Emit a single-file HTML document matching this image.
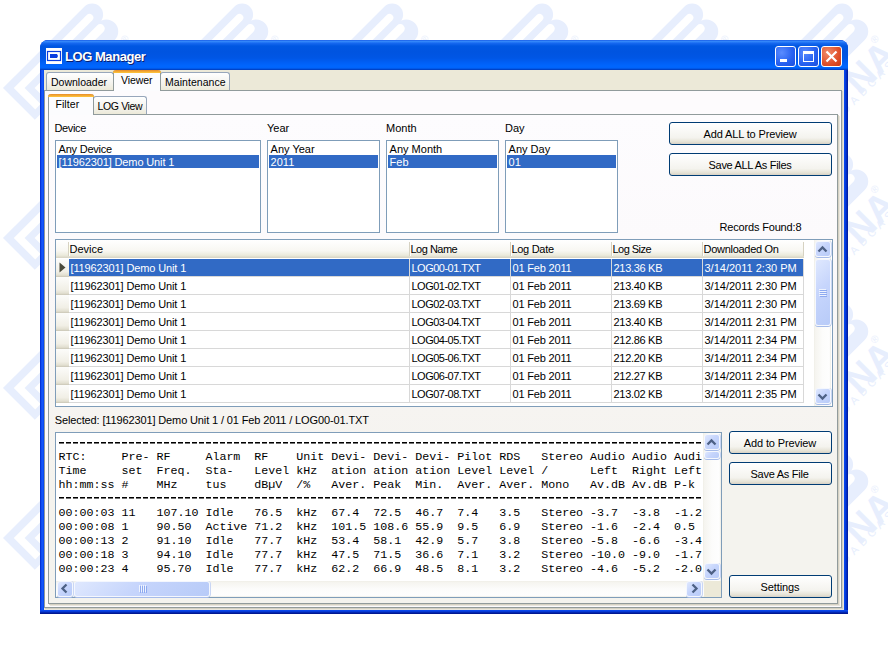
<!DOCTYPE html>
<html><head><meta charset="utf-8">
<style>
*{margin:0;padding:0;box-sizing:border-box}
html,body{width:888px;height:654px;overflow:hidden;background:#fff;position:relative;font-family:"Liberation Sans",sans-serif;font-size:11px;color:#000}
.a{position:absolute}
.t{position:absolute;white-space:nowrap;line-height:13px}
#win{left:40px;top:40px;width:808px;height:574px;background:#0831d9;border-radius:8px 8px 0 0;overflow:hidden}
#title{left:0;top:0;width:808px;height:30px;background:linear-gradient(#0a49e0 0px,#3c8ffb 1px,#2a7df8 2px,#1466ee 3.5px,#0057e2 6px,#0054e0 12px,#0056e5 18px,#005ef4 22px,#0066fe 26px,#0064fb 28px,#0043c8 29.5px,#003ab8 30px)}
#client{left:4px;top:30px;width:800px;height:540px;background:#ece9d8}
.tb{position:absolute;top:6px;width:21px;height:21px;border:1px solid #fff;border-radius:3px;background:radial-gradient(circle at 30% 30%,#5a8cff,#2660f0 60%,#1d4fdc)}
.tab{position:absolute;border:1px solid #98a7bb;border-bottom:none;border-radius:3px 3px 0 0;background:linear-gradient(#fff,#f4f3ee 60%,#ece9d8)}
.tabsel{position:absolute;border:1px solid #919b9c;border-bottom:none;border-top:none;border-radius:3px 3px 0 0;background:#fcfcfe}
.tabsel:before{content:"";position:absolute;left:-1px;right:-1px;top:0;height:3px;background:linear-gradient(#e68b2c,#ffc73c);border-radius:3px 3px 0 0}
.panel{position:absolute;border:1px solid #919b9c;box-shadow:1px 1px 0 #d5d1c3,2px 2px 0 #e9e6dc}
.lb{position:absolute;border:1px solid #7f9db9;background:#fff}
.sel{position:absolute;background:#316ac5;color:#fff}
.btn{position:absolute;border:1px solid #003c74;border-radius:3px;background:linear-gradient(#fff,#f4f3ee 70%,#e5e2d5 90%,#d6d0c5);text-align:center;line-height:22px}
.hdr{background:linear-gradient(#fff,#f8f7f2 60%,#ebeadb 85%,#d6d2c2)}
.rh{background:linear-gradient(#fcfcfa,#f1efe6 70%,#e2dfd0 90%,#c9c5b5)}
.sbb{border:1px solid #f4f7fe;border-radius:3px;background:linear-gradient(135deg,#dfe8fe,#c6d5fc 45%,#b8cbf8);box-shadow:0 1px 0 #a6bbe9,1px 0 0 #c9d6f4}
.track{background:linear-gradient(90deg,#eeede5,#f5f4ef 1px,#fcfcfb 50%,#fefefe 90%,#eeede5)}
.htrack{background:linear-gradient(#eeede5,#f5f4ef 1px,#fcfcfb 50%,#fefefe 90%,#eeede5)}
.mono{font-family:"Liberation Mono",monospace;font-size:11.667px;line-height:14px;color:#000}
.dash{background:repeating-linear-gradient(90deg,#000 0,#000 5px,transparent 5px,transparent 7px);-webkit-mask-image:linear-gradient(#000 50%,rgba(0,0,0,.55) 50%)}
</style></head><body>
<svg class="a" style="left:0;top:0" width="888" height="654"><defs><g id="lg" fill="#e7eefd">
<path d="M0 0 H115 A11 11 0 0 1 115 22 H0 Z M0 21 H113 A12 12 0 0 1 113 45 H0 Z"/>
<path fill="#fff" d="M7.6 7.6 H110.8 A3.85 3.85 0 0 1 110.8 15.3 H15.3 V38 H7.6 Z M22.3 22.3 H110.8 A4.5 4.5 0 0 1 110.8 31.3 H22.3 Z"/>
<text x="70" y="81" font-family="Liberation Sans" font-weight="bold" font-size="38">NA</text>
<text x="117" y="55" font-family="Liberation Sans" font-size="10">&#174;</text>
<text x="22" y="84" font-family="Liberation Sans" font-size="11" letter-spacing="4.5">BROADCAST</text>
</g></defs><use href="#lg" transform="translate(-147 -62) rotate(-45)"/><use href="#lg" transform="translate(-147 88) rotate(-45)"/><use href="#lg" transform="translate(-147 238) rotate(-45)"/><use href="#lg" transform="translate(-147 388) rotate(-45)"/><use href="#lg" transform="translate(-147 538) rotate(-45)"/><use href="#lg" transform="translate(3 -62) rotate(-45)"/><use href="#lg" transform="translate(3 88) rotate(-45)"/><use href="#lg" transform="translate(3 238) rotate(-45)"/><use href="#lg" transform="translate(3 388) rotate(-45)"/><use href="#lg" transform="translate(3 538) rotate(-45)"/><use href="#lg" transform="translate(153 -62) rotate(-45)"/><use href="#lg" transform="translate(153 88) rotate(-45)"/><use href="#lg" transform="translate(153 238) rotate(-45)"/><use href="#lg" transform="translate(153 388) rotate(-45)"/><use href="#lg" transform="translate(153 538) rotate(-45)"/><use href="#lg" transform="translate(303 -62) rotate(-45)"/><use href="#lg" transform="translate(303 88) rotate(-45)"/><use href="#lg" transform="translate(303 238) rotate(-45)"/><use href="#lg" transform="translate(303 388) rotate(-45)"/><use href="#lg" transform="translate(303 538) rotate(-45)"/><use href="#lg" transform="translate(453 -62) rotate(-45)"/><use href="#lg" transform="translate(453 88) rotate(-45)"/><use href="#lg" transform="translate(453 238) rotate(-45)"/><use href="#lg" transform="translate(453 388) rotate(-45)"/><use href="#lg" transform="translate(453 538) rotate(-45)"/><use href="#lg" transform="translate(603 -62) rotate(-45)"/><use href="#lg" transform="translate(603 88) rotate(-45)"/><use href="#lg" transform="translate(603 238) rotate(-45)"/><use href="#lg" transform="translate(603 388) rotate(-45)"/><use href="#lg" transform="translate(603 538) rotate(-45)"/><use href="#lg" transform="translate(753 -62) rotate(-45)"/><use href="#lg" transform="translate(753 88) rotate(-45)"/><use href="#lg" transform="translate(753 238) rotate(-45)"/><use href="#lg" transform="translate(753 388) rotate(-45)"/><use href="#lg" transform="translate(753 538) rotate(-45)"/><use href="#lg" transform="translate(903 -62) rotate(-45)"/><use href="#lg" transform="translate(903 88) rotate(-45)"/><use href="#lg" transform="translate(903 238) rotate(-45)"/><use href="#lg" transform="translate(903 388) rotate(-45)"/><use href="#lg" transform="translate(903 538) rotate(-45)"/></svg>
<div id="win" class="a">
  <div id="title" class="a">
    <svg class="a" style="left:6px;top:8px" width="16" height="16" viewBox="0 0 16 16"><rect x="0" y="0" width="16" height="16" fill="#fff"/><rect x="1.5" y="3.5" width="13" height="9" fill="none" stroke="#0a3de0" stroke-width="1.2"/><path d="M4 6 H11 L12 8 L11 10 H4 Z" fill="#0a3de0"/></svg>
    <div class="t" style="left:25px;top:10px;font-weight:bold;font-size:13px;letter-spacing:-0.45px;color:#fff;text-shadow:1px 1px 0 #0a1e6e">LOG Manager</div>
    <div class="tb" style="left:735px"><div class="a" style="left:4px;top:12px;width:7px;height:3px;background:#fff"></div></div>
    <div class="tb" style="left:758px"><div class="a" style="left:4px;top:4px;width:11px;height:11px;border:1px solid #fff;border-top-width:3px"></div></div>
    <div class="tb" style="left:781px;background:radial-gradient(circle at 30% 30%,#f08c6c,#e0502a 60%,#c83a14)">
      <svg class="a" style="left:0;top:0" width="19" height="19" viewBox="0 0 19 19"><path d="M4.5 4.5 L14.5 14.5 M14.5 4.5 L4.5 14.5" stroke="#fff" stroke-width="2.2"/></svg>
    </div>
  </div>
  <div class="a" style="left:0;top:30px;width:4px;height:544px;background:linear-gradient(90deg,#0025c8,#0840e6 1px,#1a5cff 2px,#0d50f5 3px,#0845ee)"></div>
  <div class="a" style="left:804px;top:30px;width:4px;height:544px;background:linear-gradient(90deg,#0a4cf4,#0540e4 1px,#0335d4 2px,#0024b0 3px,#00189a)"></div>
  <div class="a" style="left:0;top:570px;width:808px;height:4px;background:linear-gradient(#0a4cf2,#0843e4 1px,#0532c8 2px,#001a98 3px,#00138a)"></div>
  <div id="client" class="a"></div>
</div>
<div class="tab" style="left:46px;top:72px;width:68px;height:18px"></div>
<div class="t" style="left:51px;top:76px;font-size:10.5px;letter-spacing:-0.005px">Downloader</div>
<div class="tab" style="left:160px;top:72px;width:70px;height:18px"></div>
<div class="t" style="left:165px;top:76px;font-size:10.5px;letter-spacing:0.052px">Maintenance</div>
<div class="panel" style="left:44px;top:90px;width:798px;height:518px;background:#fdfbfd"></div>
<div class="tabsel" style="left:113px;top:70px;width:48px;height:21px"></div>
<div class="t" style="left:121px;top:74px;font-size:10.5px;letter-spacing:-0.068px">Viewer</div>
<div class="tab" style="left:93px;top:96px;width:54px;height:18px"></div>
<div class="t" style="left:97.6px;top:100px;font-size:10.5px;letter-spacing:-0.384px">LOG View</div>
<div class="panel" style="left:48px;top:114px;width:790px;height:490px;background:linear-gradient(#fdfcfe,#fcfafc 25%,#f6f4f1 60%,#f4f3ee 75%,#f4f3ee)"></div>
<div class="tabsel" style="left:48px;top:94px;width:46px;height:21px"></div>
<div class="t" style="left:55.5px;top:98px;font-size:10.5px;letter-spacing:0.059px">Filter</div>
<div class="t" style="left:54.5px;top:122px;letter-spacing:-0.354px">Device</div>
<div class="t" style="left:267px;top:122px">Year</div>
<div class="t" style="left:386px;top:122px">Month</div>
<div class="t" style="left:505px;top:122px">Day</div>
<div class="lb" style="left:55px;top:140px;width:206px;height:93px"></div>
<div class="t" style="left:58.6px;top:143px;letter-spacing:-0.234px">Any Device</div>
<div class="sel" style="left:57px;top:155px;width:202px;height:13px"></div>
<div class="t" style="left:58.6px;top:156px;color:#fff;letter-spacing:-0.124px">[11962301] Demo Unit 1</div>
<div class="lb" style="left:267px;top:140px;width:113px;height:93px"></div>
<div class="t" style="left:270.6px;top:143px">Any Year</div>
<div class="sel" style="left:269px;top:155px;width:109px;height:13px"></div>
<div class="t" style="left:270.6px;top:156px;color:#fff">2011</div>
<div class="lb" style="left:386px;top:140px;width:113px;height:93px"></div>
<div class="t" style="left:389.6px;top:143px">Any Month</div>
<div class="sel" style="left:388px;top:155px;width:109px;height:13px"></div>
<div class="t" style="left:389.6px;top:156px;color:#fff">Feb</div>
<div class="lb" style="left:505px;top:140px;width:113px;height:93px"></div>
<div class="t" style="left:508.6px;top:143px">Any Day</div>
<div class="sel" style="left:507px;top:155px;width:109px;height:13px"></div>
<div class="t" style="left:508.6px;top:156px;color:#fff">01</div>
<div class="btn" style="left:669px;top:122px;width:163px;height:23px"></div>
<div class="t" style="left:703.6px;top:128px;letter-spacing:-0.145px">Add ALL to Preview</div>
<div class="btn" style="left:669px;top:153px;width:163px;height:23px"></div>
<div class="t" style="left:708.6px;top:159px;letter-spacing:-0.322px">Save ALL As Files</div>
<div class="t" style="left:719.4px;top:221px;letter-spacing:-0.159px">Records Found:8</div>
<div class="lb" style="left:55px;top:239px;width:778px;height:168px"></div>
<div class="a hdr" style="left:56px;top:240px;width:748px;height:18px"></div>
<div class="a" style="left:68px;top:242px;width:1px;height:14px;background:#d6d2c2"></div>
<div class="a" style="left:69px;top:242px;width:1px;height:14px;background:#fff"></div>
<div class="a" style="left:409px;top:242px;width:1px;height:14px;background:#d6d2c2"></div>
<div class="a" style="left:410px;top:242px;width:1px;height:14px;background:#fff"></div>
<div class="a" style="left:510px;top:242px;width:1px;height:14px;background:#d6d2c2"></div>
<div class="a" style="left:511px;top:242px;width:1px;height:14px;background:#fff"></div>
<div class="a" style="left:611px;top:242px;width:1px;height:14px;background:#d6d2c2"></div>
<div class="a" style="left:612px;top:242px;width:1px;height:14px;background:#fff"></div>
<div class="a" style="left:702px;top:242px;width:1px;height:14px;background:#d6d2c2"></div>
<div class="a" style="left:703px;top:242px;width:1px;height:14px;background:#fff"></div>
<div class="a" style="left:803px;top:242px;width:1px;height:14px;background:#d6d2c2"></div>
<div class="a" style="left:804px;top:242px;width:1px;height:14px;background:#fff"></div>
<div class="t" style="left:69.5px;top:243px">Device</div>
<div class="t" style="left:410.5px;top:243px;letter-spacing:-0.508px">Log Name</div>
<div class="t" style="left:511.5px;top:243px;letter-spacing:-0.307px">Log Date</div>
<div class="t" style="left:612.5px;top:243px;letter-spacing:-0.527px">Log Size</div>
<div class="t" style="left:703.5px;top:243px;letter-spacing:-0.284px">Downloaded On</div>
<div class="a rh" style="left:56px;top:259px;width:13px;height:18px"></div>
<div class="sel" style="left:69px;top:259px;width:735px;height:17px"></div>
<div class="a" style="left:69px;top:276px;width:735px;height:1px;background:#d8d8d8"></div>
<div class="a" style="left:409px;top:259px;width:1px;height:17px;background:#d8d8d8"></div>
<div class="a" style="left:510px;top:259px;width:1px;height:17px;background:#d8d8d8"></div>
<div class="a" style="left:611px;top:259px;width:1px;height:17px;background:#d8d8d8"></div>
<div class="a" style="left:702px;top:259px;width:1px;height:17px;background:#d8d8d8"></div>
<div class="a" style="left:803px;top:259px;width:1px;height:17px;background:#d8d8d8"></div>
<div class="t" style="left:70.5px;top:262px;color:#fff;letter-spacing:-0.124px">[11962301] Demo Unit 1</div>
<div class="t" style="left:411.5px;top:262px;color:#fff;letter-spacing:-0.517px">LOG00-01.TXT</div>
<div class="t" style="left:512.5px;top:262px;color:#fff;letter-spacing:-0.179px">01 Feb 2011</div>
<div class="t" style="left:613.5px;top:262px;color:#fff;letter-spacing:-0.297px">213.36 KB</div>
<div class="t" style="left:704.5px;top:262px;color:#fff;letter-spacing:0.003px">3/14/2011 2:30 PM</div>
<div class="a rh" style="left:56px;top:277px;width:13px;height:18px"></div>
<div class="a" style="left:69px;top:294px;width:735px;height:1px;background:#d8d8d8"></div>
<div class="a" style="left:409px;top:277px;width:1px;height:17px;background:#d8d8d8"></div>
<div class="a" style="left:510px;top:277px;width:1px;height:17px;background:#d8d8d8"></div>
<div class="a" style="left:611px;top:277px;width:1px;height:17px;background:#d8d8d8"></div>
<div class="a" style="left:702px;top:277px;width:1px;height:17px;background:#d8d8d8"></div>
<div class="a" style="left:803px;top:277px;width:1px;height:17px;background:#d8d8d8"></div>
<div class="t" style="left:70.5px;top:280px;letter-spacing:-0.124px">[11962301] Demo Unit 1</div>
<div class="t" style="left:411.5px;top:280px;letter-spacing:-0.517px">LOG01-02.TXT</div>
<div class="t" style="left:512.5px;top:280px;letter-spacing:-0.179px">01 Feb 2011</div>
<div class="t" style="left:613.5px;top:280px;letter-spacing:-0.297px">213.40 KB</div>
<div class="t" style="left:704.5px;top:280px;letter-spacing:0.003px">3/14/2011 2:30 PM</div>
<div class="a rh" style="left:56px;top:295px;width:13px;height:18px"></div>
<div class="a" style="left:69px;top:312px;width:735px;height:1px;background:#d8d8d8"></div>
<div class="a" style="left:409px;top:295px;width:1px;height:17px;background:#d8d8d8"></div>
<div class="a" style="left:510px;top:295px;width:1px;height:17px;background:#d8d8d8"></div>
<div class="a" style="left:611px;top:295px;width:1px;height:17px;background:#d8d8d8"></div>
<div class="a" style="left:702px;top:295px;width:1px;height:17px;background:#d8d8d8"></div>
<div class="a" style="left:803px;top:295px;width:1px;height:17px;background:#d8d8d8"></div>
<div class="t" style="left:70.5px;top:298px;letter-spacing:-0.124px">[11962301] Demo Unit 1</div>
<div class="t" style="left:411.5px;top:298px;letter-spacing:-0.517px">LOG02-03.TXT</div>
<div class="t" style="left:512.5px;top:298px;letter-spacing:-0.179px">01 Feb 2011</div>
<div class="t" style="left:613.5px;top:298px;letter-spacing:-0.297px">213.69 KB</div>
<div class="t" style="left:704.5px;top:298px;letter-spacing:0.003px">3/14/2011 2:30 PM</div>
<div class="a rh" style="left:56px;top:313px;width:13px;height:18px"></div>
<div class="a" style="left:69px;top:330px;width:735px;height:1px;background:#d8d8d8"></div>
<div class="a" style="left:409px;top:313px;width:1px;height:17px;background:#d8d8d8"></div>
<div class="a" style="left:510px;top:313px;width:1px;height:17px;background:#d8d8d8"></div>
<div class="a" style="left:611px;top:313px;width:1px;height:17px;background:#d8d8d8"></div>
<div class="a" style="left:702px;top:313px;width:1px;height:17px;background:#d8d8d8"></div>
<div class="a" style="left:803px;top:313px;width:1px;height:17px;background:#d8d8d8"></div>
<div class="t" style="left:70.5px;top:316px;letter-spacing:-0.124px">[11962301] Demo Unit 1</div>
<div class="t" style="left:411.5px;top:316px;letter-spacing:-0.517px">LOG03-04.TXT</div>
<div class="t" style="left:512.5px;top:316px;letter-spacing:-0.179px">01 Feb 2011</div>
<div class="t" style="left:613.5px;top:316px;letter-spacing:-0.297px">213.40 KB</div>
<div class="t" style="left:704.5px;top:316px;letter-spacing:0.003px">3/14/2011 2:31 PM</div>
<div class="a rh" style="left:56px;top:331px;width:13px;height:18px"></div>
<div class="a" style="left:69px;top:348px;width:735px;height:1px;background:#d8d8d8"></div>
<div class="a" style="left:409px;top:331px;width:1px;height:17px;background:#d8d8d8"></div>
<div class="a" style="left:510px;top:331px;width:1px;height:17px;background:#d8d8d8"></div>
<div class="a" style="left:611px;top:331px;width:1px;height:17px;background:#d8d8d8"></div>
<div class="a" style="left:702px;top:331px;width:1px;height:17px;background:#d8d8d8"></div>
<div class="a" style="left:803px;top:331px;width:1px;height:17px;background:#d8d8d8"></div>
<div class="t" style="left:70.5px;top:334px;letter-spacing:-0.124px">[11962301] Demo Unit 1</div>
<div class="t" style="left:411.5px;top:334px;letter-spacing:-0.517px">LOG04-05.TXT</div>
<div class="t" style="left:512.5px;top:334px;letter-spacing:-0.179px">01 Feb 2011</div>
<div class="t" style="left:613.5px;top:334px;letter-spacing:-0.297px">212.86 KB</div>
<div class="t" style="left:704.5px;top:334px;letter-spacing:0.003px">3/14/2011 2:34 PM</div>
<div class="a rh" style="left:56px;top:349px;width:13px;height:18px"></div>
<div class="a" style="left:69px;top:366px;width:735px;height:1px;background:#d8d8d8"></div>
<div class="a" style="left:409px;top:349px;width:1px;height:17px;background:#d8d8d8"></div>
<div class="a" style="left:510px;top:349px;width:1px;height:17px;background:#d8d8d8"></div>
<div class="a" style="left:611px;top:349px;width:1px;height:17px;background:#d8d8d8"></div>
<div class="a" style="left:702px;top:349px;width:1px;height:17px;background:#d8d8d8"></div>
<div class="a" style="left:803px;top:349px;width:1px;height:17px;background:#d8d8d8"></div>
<div class="t" style="left:70.5px;top:352px;letter-spacing:-0.124px">[11962301] Demo Unit 1</div>
<div class="t" style="left:411.5px;top:352px;letter-spacing:-0.517px">LOG05-06.TXT</div>
<div class="t" style="left:512.5px;top:352px;letter-spacing:-0.179px">01 Feb 2011</div>
<div class="t" style="left:613.5px;top:352px;letter-spacing:-0.297px">212.20 KB</div>
<div class="t" style="left:704.5px;top:352px;letter-spacing:0.003px">3/14/2011 2:34 PM</div>
<div class="a rh" style="left:56px;top:367px;width:13px;height:18px"></div>
<div class="a" style="left:69px;top:384px;width:735px;height:1px;background:#d8d8d8"></div>
<div class="a" style="left:409px;top:367px;width:1px;height:17px;background:#d8d8d8"></div>
<div class="a" style="left:510px;top:367px;width:1px;height:17px;background:#d8d8d8"></div>
<div class="a" style="left:611px;top:367px;width:1px;height:17px;background:#d8d8d8"></div>
<div class="a" style="left:702px;top:367px;width:1px;height:17px;background:#d8d8d8"></div>
<div class="a" style="left:803px;top:367px;width:1px;height:17px;background:#d8d8d8"></div>
<div class="t" style="left:70.5px;top:370px;letter-spacing:-0.124px">[11962301] Demo Unit 1</div>
<div class="t" style="left:411.5px;top:370px;letter-spacing:-0.517px">LOG06-07.TXT</div>
<div class="t" style="left:512.5px;top:370px;letter-spacing:-0.179px">01 Feb 2011</div>
<div class="t" style="left:613.5px;top:370px;letter-spacing:-0.297px">212.27 KB</div>
<div class="t" style="left:704.5px;top:370px;letter-spacing:0.003px">3/14/2011 2:34 PM</div>
<div class="a rh" style="left:56px;top:385px;width:13px;height:18px"></div>
<div class="a" style="left:69px;top:402px;width:735px;height:1px;background:#d8d8d8"></div>
<div class="a" style="left:409px;top:385px;width:1px;height:17px;background:#d8d8d8"></div>
<div class="a" style="left:510px;top:385px;width:1px;height:17px;background:#d8d8d8"></div>
<div class="a" style="left:611px;top:385px;width:1px;height:17px;background:#d8d8d8"></div>
<div class="a" style="left:702px;top:385px;width:1px;height:17px;background:#d8d8d8"></div>
<div class="a" style="left:803px;top:385px;width:1px;height:17px;background:#d8d8d8"></div>
<div class="t" style="left:70.5px;top:388px;letter-spacing:-0.124px">[11962301] Demo Unit 1</div>
<div class="t" style="left:411.5px;top:388px;letter-spacing:-0.517px">LOG07-08.TXT</div>
<div class="t" style="left:512.5px;top:388px;letter-spacing:-0.179px">01 Feb 2011</div>
<div class="t" style="left:613.5px;top:388px;letter-spacing:-0.297px">213.02 KB</div>
<div class="t" style="left:704.5px;top:388px;letter-spacing:0.003px">3/14/2011 2:35 PM</div>
<svg class="a" style="left:59px;top:262px" width="8" height="11"><path d="M0.5 0.5 L6.5 5.5 L0.5 10.5 Z" fill="#4a4a3a"/></svg>
<div class="a track" style="left:814px;top:240px;width:17px;height:166px"></div>
<div class="a sbb" style="left:815px;top:241px;width:16px;height:16px"></div>
<svg class="a" style="left:815px;top:241px" width="16" height="16"><path d="M3.5 10.5 L7.5 6.5 L11.5 10.5" fill="none" stroke="#4d6185" stroke-width="2.3"/></svg>
<div class="a sbb" style="left:815px;top:259px;width:16px;height:67px"></div>
<div class="a" style="left:819px;top:289px;width:7px;height:1px;background:#eef3fe;box-shadow:1px 1px 0 #8eaaf0"></div>
<div class="a" style="left:819px;top:291px;width:7px;height:1px;background:#eef3fe;box-shadow:1px 1px 0 #8eaaf0"></div>
<div class="a" style="left:819px;top:293px;width:7px;height:1px;background:#eef3fe;box-shadow:1px 1px 0 #8eaaf0"></div>
<div class="a" style="left:819px;top:295px;width:7px;height:1px;background:#eef3fe;box-shadow:1px 1px 0 #8eaaf0"></div>
<div class="a sbb" style="left:815px;top:388px;width:16px;height:16px"></div>
<svg class="a" style="left:815px;top:388px" width="16" height="16"><path d="M3.5 6.5 L7.5 10.5 L11.5 6.5" fill="none" stroke="#4d6185" stroke-width="2.3"/></svg>
<div class="t" style="left:54.8px;top:414px;letter-spacing:-0.129px">Selected: [11962301] Demo Unit 1 / 01 Feb 2011 / LOG00-01.TXT</div>
<div class="lb" style="left:55px;top:432px;width:667px;height:166px"></div>
<div class="a" style="left:56px;top:433px;width:646px;height:148px;overflow:hidden"><pre class="mono" style="position:absolute;left:2.5px;top:3px"> 
RTC:     Pre- RF     Alarm  RF    Unit Devi- Devi- Devi- Pilot RDS   Stereo Audio Audio Audio
Time     set  Freq.  Sta-   Level kHz  ation ation ation Level Level /      Left  Right Left
hh:mm:ss #    MHz    tus    dB&micro;V  /%   Aver. Peak  Min.  Aver. Aver. Mono   Av.dB Av.dB P-k
 
00:00:03 11   107.10 Idle   76.5  kHz  67.4  72.5  46.7  7.4   3.5   Stereo -3.7  -3.8  -1.2
00:00:08 1    90.50  Active 71.2  kHz  101.5 108.6 55.9  9.5   6.9   Stereo -1.6  -2.4  0.5
00:00:13 2    91.10  Idle   77.7  kHz  53.4  58.1  42.9  5.7   3.8   Stereo -5.8  -6.6  -3.4
00:00:18 3    94.10  Idle   77.7  kHz  47.5  71.5  36.6  7.1   3.2   Stereo -10.0 -9.0  -1.7
00:00:23 4    95.70  Idle   77.7  kHz  62.2  66.9  48.5  8.1   3.2   Stereo -4.6  -5.2  -2.0</pre><div class="a dash" style="left:2.6px;top:9px;width:650px;height:2px"></div><div class="a dash" style="left:2.6px;top:64px;width:650px;height:2px"></div></div>
<div class="a track" style="left:703px;top:433px;width:18px;height:148px"></div>
<div class="a sbb" style="left:704px;top:434px;width:16px;height:16px"></div>
<svg class="a" style="left:704px;top:434px" width="16" height="16"><path d="M3.5 10.5 L7.5 6.5 L11.5 10.5" fill="none" stroke="#4d6185" stroke-width="2.3"/></svg>
<div class="a sbb" style="left:704px;top:451px;width:16px;height:8px"></div>
<div class="a sbb" style="left:704px;top:563px;width:16px;height:16px"></div>
<svg class="a" style="left:704px;top:563px" width="16" height="16"><path d="M3.5 6.5 L7.5 10.5 L11.5 6.5" fill="none" stroke="#4d6185" stroke-width="2.3"/></svg>
<div class="a htrack" style="left:56px;top:581px;width:648px;height:16px"></div>
<div class="a sbb" style="left:57px;top:581px;width:16px;height:16px"></div>
<svg class="a" style="left:57px;top:581px" width="16" height="16"><path d="M9.5 3.5 L5.5 7.5 L9.5 11.5" fill="none" stroke="#4d6185" stroke-width="2.3"/></svg>
<div class="a sbb" style="left:74px;top:581px;width:136px;height:16px"></div>
<div class="a" style="left:139px;top:585px;width:1px;height:7px;background:#eef3fe;box-shadow:1px 1px 0 #8eaaf0"></div>
<div class="a" style="left:141px;top:585px;width:1px;height:7px;background:#eef3fe;box-shadow:1px 1px 0 #8eaaf0"></div>
<div class="a" style="left:143px;top:585px;width:1px;height:7px;background:#eef3fe;box-shadow:1px 1px 0 #8eaaf0"></div>
<div class="a" style="left:145px;top:585px;width:1px;height:7px;background:#eef3fe;box-shadow:1px 1px 0 #8eaaf0"></div>
<div class="a sbb" style="left:686px;top:581px;width:16px;height:16px"></div>
<svg class="a" style="left:686px;top:581px" width="16" height="16"><path d="M6.5 3.5 L10.5 7.5 L6.5 11.5" fill="none" stroke="#4d6185" stroke-width="2.3"/></svg>
<div class="a" style="left:704px;top:581px;width:17px;height:16px;background:#ece9d8"></div>
<div class="btn" style="left:729px;top:431px;width:103px;height:23px"></div>
<div class="t" style="left:743.7px;top:437px;letter-spacing:-0.106px">Add to Preview</div>
<div class="btn" style="left:729px;top:462px;width:103px;height:23px"></div>
<div class="t" style="left:750.5px;top:468px;letter-spacing:-0.262px">Save As File</div>
<div class="btn" style="left:729px;top:575px;width:103px;height:23px"></div>
<div class="t" style="left:760.6px;top:581px;letter-spacing:-0.119px">Settings</div>
</body></html>
